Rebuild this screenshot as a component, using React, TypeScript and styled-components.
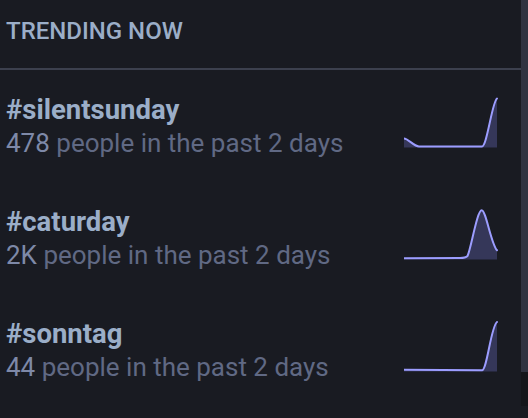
import styled, { createGlobalStyle } from 'styled-components'

const GlobalStyle = createGlobalStyle`
  html, body {
    margin: 0;
    padding: 0;
    background: #191b22;
  }
  body {
    font-family: Roboto, "Noto Sans", "Liberation Sans", sans-serif;
  }
`

const Page = styled.div`
  display: flex;
  width: 528px;
  height: 418px;
  overflow: hidden;
  background: #191b22;
`

const Main = styled.div`
  flex: 1 1 auto;
  display: flex;
  flex-direction: column;
`

const Header = styled.div`
  padding: 18px 6px 23px;
  font-size: 24px;
  line-height: 27px;
  font-weight: 500;
  color: #9baec8;
  text-transform: uppercase;
  border-bottom: 2px solid #3c404e;
`

const Row = styled.div`
  display: flex;
  align-items: center;
  padding: 23px 23px 22px 6px;
`

const Info = styled.div`
  flex: 1 1 auto;
  display: flex;
  flex-direction: column;
  white-space: nowrap;
`

const Tag = styled.a`
  font-size: 27.5px;
  line-height: 34px;
  color: #9baec8;
  font-weight: 700;
  text-decoration: none;
`

const Meta = styled.span`
  font-size: 26px;
  line-height: 33px;
  color: #606984;
  strong {
    color: #7e89a8;
    font-weight: 400;
  }
`

const Spark = styled.svg`
  flex: 0 0 auto;
  width: 94px;
  height: 52px;
  margin-bottom: 8px;
  .area {
    fill: rgba(140, 141, 255, 0.25);
    stroke: none;
  }
  .line {
    fill: none;
    stroke: #9c9dff;
    stroke-width: 2;
    stroke-linecap: round;
  }
`

const Track = styled.div`
  flex: 0 0 7px;
  height: 406px;
  background: #15161b;
`

const Thumb = styled.div`
  height: 372px;
  background: #303341;
`

type Trend = { tag: string; count: string; line: string }

const trends: Trend[] = [
  {
    tag: 'silentsunday',
    count: '478',
    line: 'M0,41.5 C4,41.5 10,49.5 15,49.5 L78,49.5 C83,49.5 88,5 93,1.5',
  },
  {
    tag: 'caturday',
    count: '2K',
    line: 'M0,49.3 L56,49 C60,49 62,48.5 63.5,47 C67,40 73,1.3 77.7,1.3 C82,1.3 87,35 93,41.3',
  },
  {
    tag: 'sonntag',
    count: '44',
    line: 'M0,48.7 L78,49.3 C83,49.3 87,5 93,1',
  },
]

function Sparkline({ line }: { line: string }) {
  return (
    <Spark viewBox="0 0 94 52">
      <path className="area" d={`${line} L93,50.5 L0,50.5 Z`} />
      <path className="line" d={line} />
    </Spark>
  )
}

function App() {
  return (
    <Page>
      <GlobalStyle />
      <Main>
        <Header>Trending now</Header>
        {trends.map((t) => (
          <Row key={t.tag}>
            <Info>
              <Tag href="#">#{t.tag}</Tag>
              <Meta>
                <strong>{t.count}</strong> people in the past 2 days
              </Meta>
            </Info>
            <Sparkline line={t.line} />
          </Row>
        ))}
      </Main>
      <Track>
        <Thumb />
      </Track>
    </Page>
  )
}

export default App
